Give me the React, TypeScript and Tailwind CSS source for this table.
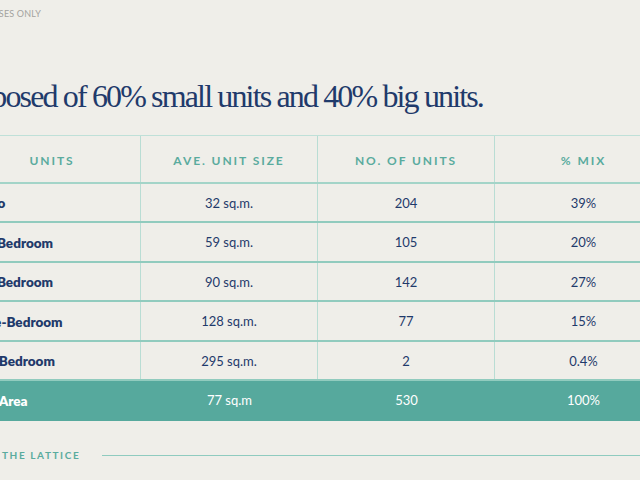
const rows = [
  { name: "Studio", size: "32 sq.m.", count: "204", mix: "39%" },
  { name: "One-Bedroom", size: "59 sq.m.", count: "105", mix: "20%" },
  { name: "Two-Bedroom", size: "90 sq.m.", count: "142", mix: "27%" },
  { name: "Three-Bedroom", size: "128 sq.m.", count: "77", mix: "15%" },
  { name: "Four-Bedroom", size: "295 sq.m.", count: "2", mix: "0.4%" },
];

const sans = "font-['Lato','Open_Sans',sans-serif]";

function App() {
  return (
    <div className={`h-[480px] w-[640px] overflow-hidden bg-[#efeee9] ${sans}`}>
      {/* disclaimer, clipped at the left edge */}
      <div className="flex w-[41px] justify-end pt-[7px]">
        <span className="whitespace-nowrap text-[9px] tracking-[0.02em] text-[#a3a39f]">
          FOR ILLUSTRATIVE PURPOSES ONLY
        </span>
      </div>

      <div className="mt-[55px] flex w-[483px] justify-end">
        <h1 className="whitespace-nowrap font-['Liberation_Serif',serif] text-[32px] font-normal leading-[40px] tracking-[-0.058em] text-[#1f3a6b]">
          The development is composed of 60% small units and 40% big units.
        </h1>
      </div>

      <div className="-ml-[36px] mt-[19px] w-[708px] border-t border-[#bfe0d8]">
        <div className="grid h-[48px] grid-cols-4 border-b-2 border-[#a3d4c8] text-[12px] font-bold tracking-[0.16em] text-[#5aab9e]">
          <div className="flex items-center justify-center border-r border-[#b9ddd4] pt-[5px]">UNITS</div>
          <div className="flex items-center justify-center border-r border-[#b9ddd4] pt-[5px]">AVE. UNIT SIZE</div>
          <div className="flex items-center justify-center border-r border-[#b9ddd4] pt-[5px]">NO. OF UNITS</div>
          <div className="flex items-center justify-center pt-[5px]">% MIX</div>
        </div>

        {rows.map((r) => (
          <div
            key={r.name}
            className="grid h-[39.5px] grid-cols-4 border-b-2 border-[#91cbbe] text-[13px] text-[#1f3a6b]"
          >
            <div className="flex items-center border-r border-[#b9ddd4] pl-[2px] pt-[2px] text-[13.5px] font-extrabold">{r.name}</div>
            <div className="flex items-center justify-center border-r border-[#b9ddd4] pt-[2px]">{r.size}</div>
            <div className="flex items-center justify-center border-r border-[#b9ddd4] pt-[2px]">{r.count}</div>
            <div className="flex items-center justify-center pt-[2px]">{r.mix}</div>
          </div>
        ))}

        <div className="grid h-[40px] grid-cols-4 bg-[#56a99d] text-[13px] text-white">
          <div className="flex items-center pl-[2px] text-[13.5px] font-extrabold">Total Area</div>
          <div className="flex items-center justify-center">77 sq.m</div>
          <div className="flex items-center justify-center">530</div>
          <div className="flex items-center justify-center">100%</div>
        </div>
      </div>

      <div className="mt-[27px] flex items-center">
        <span className="w-[102px] whitespace-nowrap pl-[2px] text-[10px] font-bold tracking-[0.16em] text-[#5aab9e]">
          THE LATTICE
        </span>
        <div className="h-[1.5px] flex-1 bg-[#8fcbbf]" />
      </div>
    </div>
  );
}

export default App;
